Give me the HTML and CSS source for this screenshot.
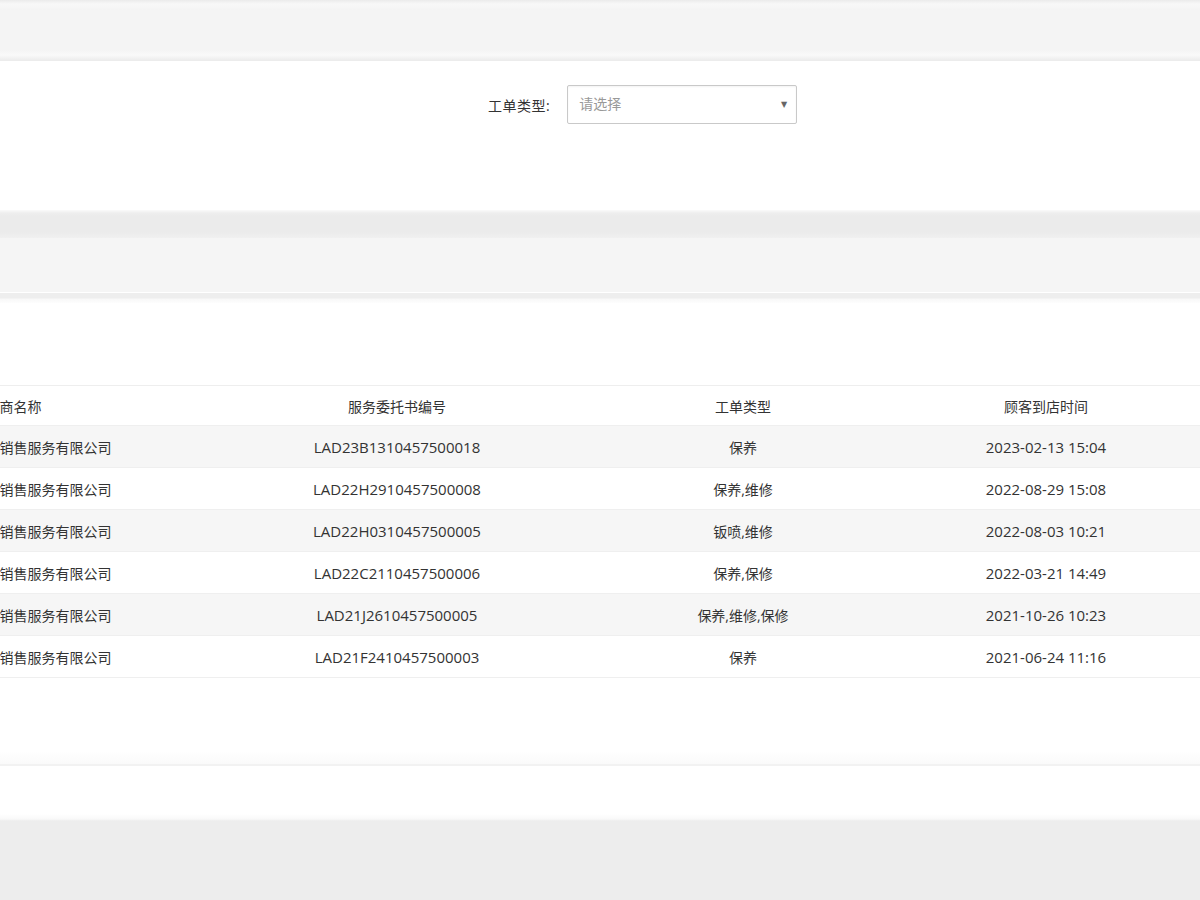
FILE: index.html
```html
<!DOCTYPE html>
<html lang="zh-CN">
<head>
<meta charset="utf-8">
<title>工单列表</title>
<link rel="stylesheet" href="styles.css">
</head>
<body>
<div class="topbar"></div>
<section class="filter-panel">
  <div class="filter-row">
    <label class="filter-label">工单类型:</label>
    <div class="select">
      <span class="select-placeholder">请选择</span>
      <span class="select-arrow">&#9660;</span>
    </div>
  </div>
</section>
<div class="section-head">
  <div class="section-head-dark"></div>
  <div class="section-head-light"></div>
  <div class="section-head-edge"></div>
</div>
<section class="list-panel">
  <div class="table-clip">
    <table class="grid">
      <colgroup>
        <col class="c1"><col class="c2"><col class="c3"><col class="c4"><col class="c5">
      </colgroup>
      <thead>
        <tr><th>经销商名称</th><th>服务委托书编号</th><th>工单类型</th><th>顾客到店时间</th><th></th></tr>
      </thead>
      <tbody>
        <tr><td>成都新元素汽车销售服务有限公司</td><td>LAD23B1310457500018</td><td>保养</td><td>2023-02-13 15:04</td><td></td></tr>
        <tr><td>成都新元素汽车销售服务有限公司</td><td>LAD22H2910457500008</td><td>保养,维修</td><td>2022-08-29 15:08</td><td></td></tr>
        <tr><td>成都新元素汽车销售服务有限公司</td><td>LAD22H0310457500005</td><td>钣喷,维修</td><td>2022-08-03 10:21</td><td></td></tr>
        <tr><td>成都新元素汽车销售服务有限公司</td><td>LAD22C2110457500006</td><td>保养,保修</td><td>2022-03-21 14:49</td><td></td></tr>
        <tr><td>成都新元素汽车销售服务有限公司</td><td>LAD21J2610457500005</td><td>保养,维修,保修</td><td>2021-10-26 10:23</td><td></td></tr>
        <tr><td>成都新元素汽车销售服务有限公司</td><td>LAD21F2410457500003</td><td>保养</td><td>2021-06-24 11:16</td><td></td></tr>
      </tbody>
    </table>
  </div>
</section>
<section class="footer-panel"></section>
</body>
</html>
```
FILE: styles.css
```css
html, body {
  margin: 0;
  padding: 0;
}
body {
  background: #ededed;
  font-family: "Open Sans", "Noto Sans CJK SC", sans-serif;
  font-size: 15px;
  color: #333;
  width: 1200px;
  overflow: hidden;
}
.topbar {
  height: 61px;
  background: linear-gradient(#ebebeb 0, #f8f8f8 4px, #f4f4f4 10px, #f4f4f4 50px, #f9f9f9 55px, #efefef 59px, #ebebeb 61px);
}
.filter-panel {
  background: #fff;
  height: 149px;
  box-sizing: border-box;
  padding-top: 24px;
}
.filter-row {
  display: flex;
  align-items: center;
  padding-left: 488px;
  gap: 17px;
}
.filter-label {
  font-size: 14px;
  color: #333;
  letter-spacing: 0.5px;
}
.select {
  width: 230px;
  height: 39px;
  box-sizing: border-box;
  border: 1px solid #c9c9c9;
  border-radius: 2px;
  display: flex;
  align-items: center;
  justify-content: space-between;
  padding: 0 9px 0 11px;
  box-shadow: inset 0 1px 2px rgba(0,0,0,0.05);
}
.select-placeholder {
  font-size: 14px;
  color: #999;
  margin-top: -4px;
}
.select-arrow {
  font-size: 8px;
  color: #666;
  font-family: "DejaVu Sans", sans-serif;
}
.section-head {
  display: flex;
  flex-direction: column;
}
.section-head-dark {
  height: 28px;
  background: linear-gradient(#fafafa 0, #eeeeee 3px, #ebebeb 6px, #ebebeb 22px, #f0f0f0 28px);
}
.section-head-light {
  height: 54px;
  background: #f5f5f5;
  border-bottom: 1px solid #fff;
}
.section-head-edge {
  height: 10px;
  background: linear-gradient(#eeeeee 0, #eeeeee 5px, #f8f8f8 6px, #fdfdfd 10px);
}
.list-panel {
  height: 463px;
  box-sizing: border-box;
  padding-top: 82px;
  border-bottom: 2px solid #f2f2f2;
  background: linear-gradient(#fff 0, #fff 448px, #fafafa 461px);
}
.table-clip {
  overflow: hidden;
}
.grid {
  border-collapse: collapse;
  table-layout: fixed;
  width: 1620px;
  margin-left: -211px;
}
.c1 { width: 435px; }
.c2 { width: 346px; }
.c3 { width: 346px; }
.c4 { width: 260px; }
.c5 { width: 233px; }
.grid th, .grid td {
  text-align: center;
  white-space: nowrap;
  overflow: hidden;
  padding: 0;
  height: 41px;
  font-weight: normal;
  color: #333;
}
.grid th {
  font-size: 14px;
  height: 39px;
  border-top: 1px solid #eeeeee;
}
.grid td {
  border-top: 1px solid #efefef;
  font-size: 15px;
}
.grid td:nth-child(1), .grid td:nth-child(3) {
  font-size: 14px;
}
.grid tbody tr:nth-child(odd) td {
  background: #f6f6f6;
}
.grid tbody tr:last-child td {
  border-bottom: 1px solid #efefef;
}
.footer-panel {
  height: 55px;
  background: linear-gradient(#fff 0, #fff 48px, #f9f9f9 53px, #ececec 55px);
}
```
